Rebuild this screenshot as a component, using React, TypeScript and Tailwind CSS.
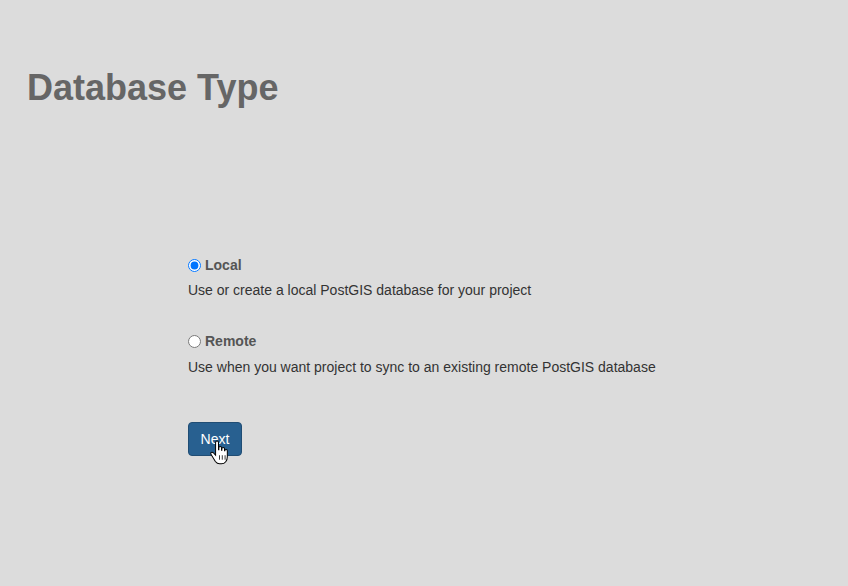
import React, { useState } from "react";

const App = () => {
  const [dbType, setDbType] = useState<string>("local");

  return (
    <div className="min-h-[586px] w-full bg-[#dcdcdc] font-['Liberation_Sans',Arial,sans-serif] text-[#333]">
      <div className="px-[27px] pt-[68px]">
        <h1 className="text-[36px] font-bold leading-[40px] text-[#666]">Database Type</h1>
      </div>

      {/* Options */}
      <div className="pl-[188px] pt-[147px]">
        <label className="flex items-center gap-[4px] text-[14px] font-bold leading-[20px] text-[#555]">
          <input
            type="radio"
            name="dbtype"
            checked={dbType === "local"}
            onChange={() => setDbType("local")}
            className="m-0 h-[13px] w-[13px] accent-[#0075ff]"
          />
          Local
        </label>
        <p className="mt-[5px] text-[14px] leading-[20px]">Use or create a local PostGIS database for your project</p>

        <label className="mt-[31px] flex items-center gap-[4px] text-[14px] font-bold leading-[20px] text-[#555]">
          <input
            type="radio"
            name="dbtype"
            checked={dbType === "remote"}
            onChange={() => setDbType("remote")}
            className="m-0 h-[13px] w-[13px] accent-[#0075ff]"
          />
          Remote
        </label>
        <p className="mt-[6px] text-[14px] leading-[20px]">
          Use when you want project to sync to an existing remote PostGIS database
        </p>

        <div className="relative mt-[45px] inline-block">
          <button className="h-[34px] w-[54px] rounded-[4px] border border-[#204d74] bg-[#286090] text-[14px] text-white">
            Next
          </button>
          {/* hand cursor */}
          <svg className="absolute left-[22px] top-[18px]" width="19" height="26" viewBox="0 0 17 22">
            <path
              d="M5 1.5c0-.8.6-1.3 1.3-1.3s1.3.5 1.3 1.3V8h.3V6.3c0-.7.6-1.2 1.2-1.2s1.2.5 1.2 1.2V8.5h.3V7.3c0-.7.6-1.2 1.2-1.2s1.2.5 1.2 1.2v1.7h.2c0-.7.6-1.2 1.2-1.2s1.1.5 1.1 1.2v5.3c0 3.5-2 6.4-5.3 6.4H8.6c-1.7 0-2.8-.8-3.8-2.1L1 12.3c-.5-.6-.4-1.4.2-1.8.6-.4 1.3-.2 1.8.3L5 13V1.5z"
              fill="#fff"
              stroke="#000"
              strokeWidth="0.9"
            />
            <path d="M8.5 13v4M11 13v4M13.5 13v4" stroke="#000" strokeWidth="0.7" />
          </svg>
        </div>
      </div>
    </div>
  );
};

export default App;
